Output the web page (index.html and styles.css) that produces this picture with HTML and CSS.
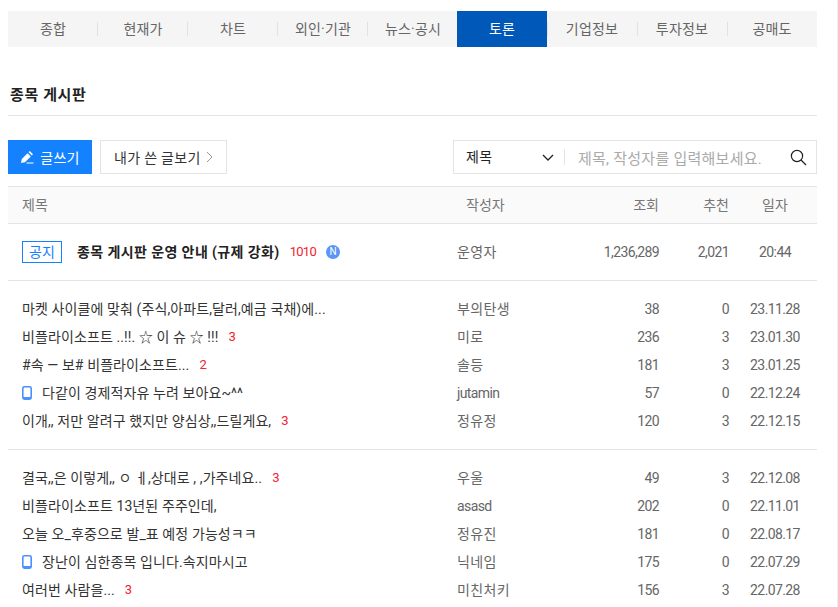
FILE: index.html
```html
<!DOCTYPE html>
<html lang="ko">
<head>
<meta charset="utf-8">
<title>종목 게시판</title>
<link rel="stylesheet" href="styles.css">
</head>
<body>
<div class="page">
  <nav class="tabs">
    <a class="tab">종합</a><a class="tab">현재가</a><a class="tab">차트</a><a class="tab">외인·기관</a><a class="tab">뉴스·공시</a><a class="tab active">토론</a><a class="tab">기업정보</a><a class="tab">투자정보</a><a class="tab last">공매도</a>
  </nav>
  <h2 class="title">종목 게시판</h2>
  <div class="toolbar">
    <a class="btn-write">
      <svg class="pen" width="14" height="13" viewBox="0 0 14 13"><path d="M1 12l.8-4L7.6 2.2l3.2 3.2L5 11.2z" fill="#fff"/><path d="M8.6 1.2L9.8 0l3.2 3.2-1.2 1.2z" fill="#fff"/><path d="M6.5 11.5H13.5V12.5H6.5z" fill="#fff"/></svg>
      글쓰기
    </a>
    <a class="btn-mine">내가 쓴 글보기
      <svg width="7" height="12" viewBox="0 0 7 12"><path d="M1 1l5 5-5 5" fill="none" stroke="#999" stroke-width="1"/></svg>
    </a>
    <div class="search">
      <span class="select">제목
        <svg width="12" height="7" viewBox="0 0 12 7"><path d="M1 1l5 5 5-5" fill="none" stroke="#222" stroke-width="1.3"/></svg>
      </span>
      <span class="placeholder">제목, 작성자를 입력해보세요.</span>
      <svg class="glass" width="17" height="17" viewBox="0 0 17 17"><circle cx="7" cy="7" r="5.6" fill="none" stroke="#222" stroke-width="1.2"/><path d="M11 11l5 5" stroke="#222" stroke-width="1.2"/></svg>
    </div>
  </div>
  <div class="board">
    <div class="row head">
      <span class="c-title">제목</span><span class="c-author">작성자</span><span class="c-num">조회</span><span class="c-num">추천</span><span class="c-date">일자</span>
    </div>
    <div class="row notice">
      <span class="c-title"><span class="tag">공지</span><b class="notice-text">종목 게시판 운영 안내 (규제 강화)</b><span class="count">1010</span><span class="new">N</span></span>
      <span class="c-author">운영자</span><span class="c-num">1,236,289</span><span class="c-num">2,021</span><span class="c-date">20:44</span>
    </div>
    <div class="group">
      <div class="row"><span class="c-title">마켓 사이클에 맞춰 (주식,아파트,달러,예금 국채)에...</span><span class="c-author">부의탄생</span><span class="c-num">38</span><span class="c-num">0</span><span class="c-date">23.11.28</span></div>
      <div class="row"><span class="c-title">비플라이소프트 ..!!. ☆ 이 슈 ☆ !!!<span class="count">3</span></span><span class="c-author">미로</span><span class="c-num">236</span><span class="c-num">3</span><span class="c-date">23.01.30</span></div>
      <div class="row"><span class="c-title">#속 — 보# 비플라이소프트...<span class="count">2</span></span><span class="c-author">솔등</span><span class="c-num">181</span><span class="c-num">3</span><span class="c-date">23.01.25</span></div>
      <div class="row"><span class="c-title"><svg class="phone" width="10" height="14" viewBox="0 0 10 14"><rect x="0.8" y="0.8" width="8.4" height="12.4" rx="1.6" fill="none" stroke="#4a90ff" stroke-width="1.6"/><path d="M1 11h8v2H1z" fill="#4a90ff"/></svg>다같이 경제적자유 누려 보아요~^^</span><span class="c-author latin">jutamin</span><span class="c-num">57</span><span class="c-num">0</span><span class="c-date">22.12.24</span></div>
      <div class="row"><span class="c-title">이개,, 저만 알려구 했지만 양심상,,드릴게요,<span class="count">3</span></span><span class="c-author">정유정</span><span class="c-num">120</span><span class="c-num">3</span><span class="c-date">22.12.15</span></div>
    </div>
    <div class="group">
      <div class="row"><span class="c-title">결국,,은 이렇게,, ㅇ ㅔ,상대로 , ,가주네요..<span class="count">3</span></span><span class="c-author">우울</span><span class="c-num">49</span><span class="c-num">3</span><span class="c-date">22.12.08</span></div>
      <div class="row"><span class="c-title">비플라이소프트 13년된 주주인데,</span><span class="c-author latin">asasd</span><span class="c-num">202</span><span class="c-num">0</span><span class="c-date">22.11.01</span></div>
      <div class="row"><span class="c-title">오늘 오_후중으로 발_표 예정 가능성ㅋㅋ</span><span class="c-author">정유진</span><span class="c-num">181</span><span class="c-num">0</span><span class="c-date">22.08.17</span></div>
      <div class="row"><span class="c-title"><svg class="phone" width="10" height="14" viewBox="0 0 10 14"><rect x="0.8" y="0.8" width="8.4" height="12.4" rx="1.6" fill="none" stroke="#4a90ff" stroke-width="1.6"/><path d="M1 11h8v2H1z" fill="#4a90ff"/></svg>장난이 심한종목 입니다.속지마시고</span><span class="c-author">닉네임</span><span class="c-num">175</span><span class="c-num">0</span><span class="c-date">22.07.29</span></div>
      <div class="row"><span class="c-title">여러번 사람을...<span class="count">3</span></span><span class="c-author">미친처키</span><span class="c-num">156</span><span class="c-num">3</span><span class="c-date">22.07.28</span></div>
    </div>
  </div>
</div>
</body>
</html>
```
FILE: styles.css
```css
* { box-sizing: border-box; }
html, body { margin: 0; height: 100%; overflow: hidden; background: #fff; }
body { font-family: Roboto, "Noto Sans CJK KR", sans-serif; font-size: 14px; color: #333; }
.page { width: 838px; height: 607px; padding: 11px 20px 0 8px; border-right: 1px solid #eee; overflow: hidden; }

.tabs { display: flex; height: 36px; background: #f5f5f5; }
.tab { position: relative; flex: none; width: 90px; line-height: 36px; text-align: center; color: #666; font-size: 14px; letter-spacing: 0.2px; }
.tab::after { content: ""; position: absolute; right: 0; top: 11px; height: 14px; width: 1px; background: #e2e2e2; }
.tab.last::after { display: none; }
.tab.active { margin-left: -1px; background: #0058b8; color: #fff; }
.tab.active::after { right: -1px; }
.tab.active ~ .tab::after { right: -1px; }
.tab.active ~ .tab.last::after { display: none; }

.title { margin: 0; height: 69px; padding: 38px 2px 0; font-size: 15px; font-weight: 700; line-height: 20px; letter-spacing: 0.6px; color: #222; border-bottom: 1px solid #e4e4e4; }

.toolbar { display: flex; align-items: stretch; height: 34px; margin-top: 24px; }
.btn-write { display: flex; align-items: center; justify-content: center; gap: 6px; width: 84px; background: #1482ff; color: #fff; font-size: 14px; letter-spacing: 0.3px; }
.btn-mine { display: flex; align-items: center; gap: 5px; width: 127px; margin-left: 8px; padding-left: 13px; border: 1px solid #e4e4e4; font-size: 14px; letter-spacing: 0.3px; color: #333; }
.search { display: flex; align-items: center; width: 364px; margin-left: auto; border: 1px solid #e4e4e4; }
.select { display: flex; align-items: center; justify-content: space-between; width: 111px; height: 16px; padding: 0 10px 0 12px; border-right: 1px solid #e4e4e4; font-size: 14px; letter-spacing: 0.4px; color: #222; line-height: 16px; }
.placeholder { margin-left: 13px; color: #aaa; font-size: 15px; letter-spacing: 0.25px; }
.glass { margin-left: auto; margin-right: 9px; }

.board { margin-top: 12px; }
.row { display: grid; grid-template-columns: 435px 120px 82px 70px 88px; height: 28px; padding-left: 14px; align-items: center; line-height: 20px; color: #333; }
.c-title { display: flex; align-items: center; white-space: nowrap; letter-spacing: 0.1px; }
.c-author { color: #666; letter-spacing: 0.4px; }
.c-author.latin { letter-spacing: -0.6px; }
.c-num { color: #666; text-align: right; letter-spacing: -0.6px; }
.c-date { color: #666; padding-left: 4px; text-align: center; letter-spacing: -0.6px; }
.row.head { height: 38px; background: #fafafa; border-top: 1px solid #e4e4e4; border-bottom: 1px solid #e4e4e4; }
.row.head span { color: #777; letter-spacing: 0; }
.row.head .c-author { padding-left: 9px; }
.row.notice { height: 57px; border-bottom: 1px solid #e4e4e4; }
.group { padding: 14px 0; border-bottom: 1px solid #e4e4e4; }
.group:last-child { border-bottom: 0; }
.tag { display: inline-block; width: 40px; height: 22px; margin-right: 15px; border: 1px solid #1482ff; color: #1482ff; line-height: 20px; text-align: center; letter-spacing: 0; }
.notice-text { color: #222; letter-spacing: 0.4px; }
.count { margin-left: 10px; color: #f5222d; font-size: 13px; letter-spacing: -0.7px; }
.new { display: inline-block; width: 14px; height: 14px; margin-left: 10px; border-radius: 50%; background: #5b96f7; color: #fff; font-size: 10px; line-height: 14px; text-align: center; letter-spacing: 0; }
.phone { flex: none; margin-right: 10px; }
```
